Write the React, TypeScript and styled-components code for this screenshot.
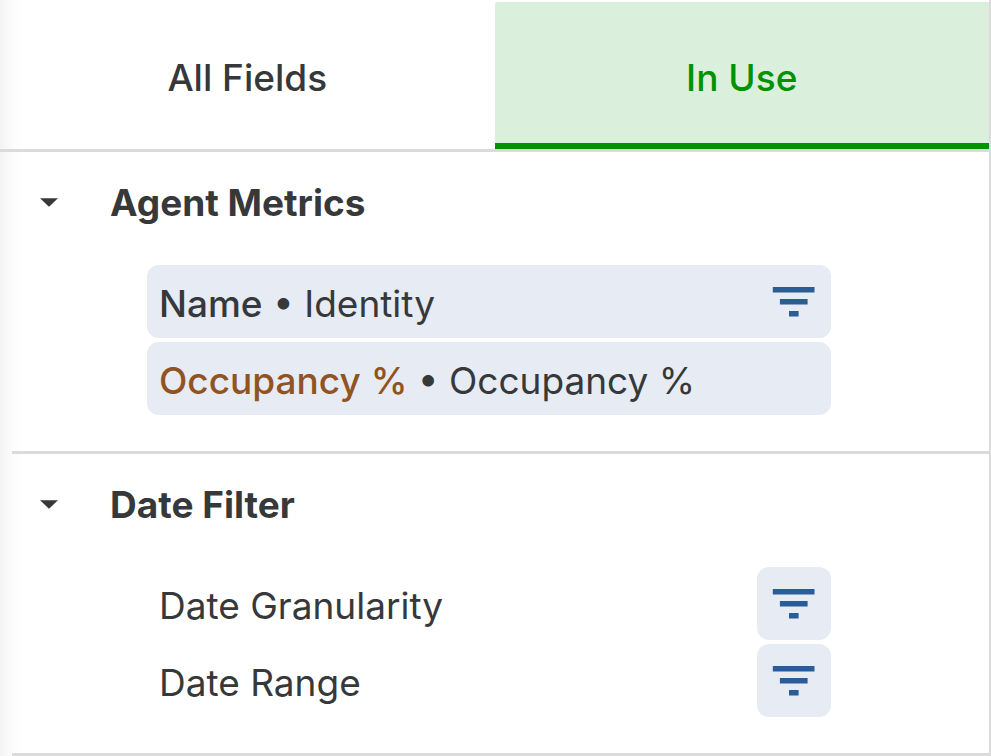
import React, { useState } from "react";
import styled, { createGlobalStyle } from "styled-components";

const colors = {
  text: "#36383a",
  line: "#dbdbdb",
  chip: "#e6ebf4",
  icon: "#2a5d96",
  green: "#009200",
  greenTint: "#dbf0dc",
  measure: "#915321",
};

const GlobalStyle = createGlobalStyle`
  * { box-sizing: border-box; }
  body {
    margin: 0;
    background: #fff;
    color: ${colors.text};
    font-family: Inter, "Liberation Sans", sans-serif;
    font-size: 37px;
    line-height: 48px;
  }
  button {
    font: inherit;
    color: inherit;
    background: none;
    border: 0;
    padding: 0;
    cursor: pointer;
  }
`;

const Panel = styled.aside`
  min-height: 100vh;
  border-right: 2px solid ${colors.line};
  background: linear-gradient(to right, #f4f4f4 0, #fbfbfb 12px, #fdfdfd 14px, #fff 26px);
`;

const TabBar = styled.div`
  display: grid;
  grid-template-columns: 1fr 1fr;
  padding-top: 2px;
  border-bottom: 3px solid ${colors.line};
`;

const Tab = styled.button<{ $active: boolean }>`
  height: 147px;
  padding-top: 10px;
  border-bottom: 6px solid ${(p) => (p.$active ? colors.green : "transparent")};
  border-top-left-radius: 2px;
  background: ${(p) => (p.$active ? colors.greenTint : "transparent")};
  color: ${(p) => (p.$active ? colors.green : colors.text)};
  font-weight: 500;
`;

const Section = styled.section`
  margin-left: 12px;
  border-bottom: 3px solid ${colors.line};
`;

const SectionTitle = styled.h2`
  margin: 0;
  font-size: 37px;
  font-weight: 700;
`;

const SectionToggle = styled.button`
  display: flex;
  align-items: center;
  width: 100%;
  height: 102px;
  padding-left: 28px;
  gap: 52px;
  text-align: left;
`;

const FieldList = styled.ul`
  display: flex;
  flex-direction: column;
  gap: 4px;
  list-style: none;
  margin: 0;
  padding: 11px 158px 36px 135px;
`;

const FieldRow = styled.li<{ $selected: boolean }>`
  display: flex;
  align-items: center;
  justify-content: space-between;
  height: 73px;
  padding-left: 12px;
  border-radius: 12px;
  background: ${(p) => (p.$selected ? colors.chip : "transparent")};
`;

const FieldLabel = styled.span`
  white-space: pre;
  padding-top: 5px;
`;

const FieldName = styled.span<{ $measure: boolean }>`
  font-weight: 500;
  color: ${(p) => (p.$measure ? colors.measure : colors.text)};
`;

const FilterButton = styled.button`
  display: flex;
  align-items: center;
  justify-content: center;
  width: 74px;
  height: 73px;
  border-radius: 12px;
  background: ${colors.chip};
`;

const Caret = () => (
  <svg width="18" height="10" viewBox="0 0 18 10" aria-hidden="true">
    <path d="M0 0.200h18L9 8.700z" fill={colors.text} />
  </svg>
);

const FilterIcon = () => (
  <svg width="44" height="33" viewBox="0 0 44 33" fill={colors.icon} aria-hidden="true">
    <path d="M0.800 2h41.700v5.400h-41.700zM7.900 14h27.700v5.400h-27.700zM17 26h9.600v5.400h-9.600z" />
  </svg>
);

type Field = {
  name?: string;
  label: string;
  measure?: boolean;
  filter?: boolean;
};

const sections: { title: string; fields: Field[] }[] = [
  {
    title: "Agent Metrics",
    fields: [
      { name: "Name", label: "Identity", filter: true },
      { name: "Occupancy %", label: "Occupancy %", measure: true },
    ],
  },
  {
    title: "Date Filter",
    fields: [
      { label: "Date Granularity", filter: true },
      { label: "Date Range", filter: true },
    ],
  },
];

const FieldSection = ({ title, fields }: { title: string; fields: Field[] }) => {
  const [open, setOpen] = useState(true);
  return (
    <Section>
      <SectionTitle>
        <SectionToggle aria-expanded={open} onClick={() => setOpen(!open)}>
          <Caret />
          {title}
        </SectionToggle>
      </SectionTitle>
      {open && (
        <FieldList>
          {fields.map((f) => (
            <FieldRow key={f.label} $selected={!!f.name}>
              <FieldLabel>
                {f.name && (
                  <>
                    <FieldName $measure={!!f.measure}>{f.name}</FieldName>
                    {" • "}
                  </>
                )}
                {f.label}
              </FieldLabel>
              {f.filter && (
                <FilterButton aria-label={`Filter by ${f.label}`}>
                  <FilterIcon />
                </FilterButton>
              )}
            </FieldRow>
          ))}
        </FieldList>
      )}
    </Section>
  );
};

export default function App() {
  const [tab, setTab] = useState("In Use");
  return (
    <>
      <GlobalStyle />
      <Panel>
        <TabBar role="tablist">
          {["All Fields", "In Use"].map((name) => (
            <Tab
              key={name}
              role="tab"
              aria-selected={tab === name}
              $active={tab === name}
              onClick={() => setTab(name)}
            >
              {name}
            </Tab>
          ))}
        </TabBar>
        {sections.map((s) => (
          <FieldSection key={s.title} {...s} />
        ))}
      </Panel>
    </>
  );
}
